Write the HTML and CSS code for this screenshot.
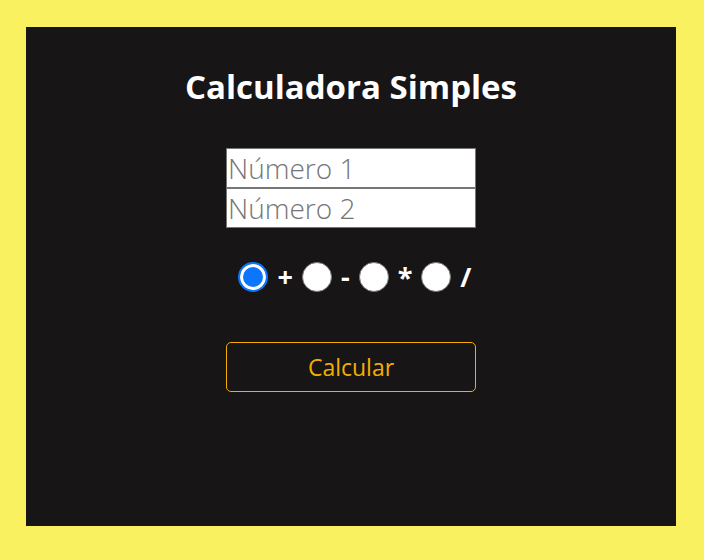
FILE: index.html
```html
<!DOCTYPE html>
<html lang="pt">
<head>
<meta charset="utf-8">
<title>Calculadora Simples</title>
<link rel="stylesheet" href="styles.css">
</head>
<body>
<main class="panel">
  <h1 class="title">Calculadora Simples</h1>
  <div class="inputs">
    <input class="field" type="text" placeholder="Número 1">
    <input class="field" type="text" placeholder="Número 2">
  </div>
  <div class="ops">
    <input class="radio" type="radio" name="op" checked><span class="op">+</span>
    <input class="radio" type="radio" name="op"><span class="op">-</span>
    <input class="radio" type="radio" name="op"><span class="op">*</span>
    <input class="radio" type="radio" name="op"><span class="op op-last">/</span>
  </div>
  <button class="btn" type="button">Calcular</button>
</main>
</body>
</html>
```
FILE: styles.css
```css
html, body {
  margin: 0;
  padding: 0;
  background: #f9f160;
  height: 100%;
}
body {
  padding: 27px 28px 34px 26px;
  box-sizing: border-box;
  font-family: "Open Sans", "Noto Sans", sans-serif;
}
.panel {
  width: 650px;
  height: 499px;
  background: #171516;
  display: flex;
  flex-direction: column;
  align-items: center;
  box-sizing: border-box;
  padding-top: 40px;
}
.title {
  margin: 0;
  color: #ffffff;
  font-size: 33px;
  font-weight: 700;
  line-height: 40px;
}
.inputs {
  display: flex;
  flex-direction: column;
  margin-top: 41px;
  width: 250px;
}
.field {
  display: block;
  width: 250px;
  height: 40px;
  box-sizing: border-box;
  margin: 0;
  padding: 0 1px;
  border: 1px solid #767676;
  background: #ffffff;
  font-family: "Open Sans", sans-serif;
  font-weight: 300;
  font-size: 28px;
  color: #333;
}
.field::placeholder {
  color: #757575;
}
.ops {
  display: flex;
  align-items: center;
  margin-top: 34px;
  margin-left: 8px;
  height: 30px;
}
.radio {
  appearance: none;
  -webkit-appearance: none;
  flex: none;
  width: 30px;
  height: 30px;
  margin: 0 9px 0 0;
  border: 1px solid #767676;
  border-radius: 50%;
  background: #ffffff;
  box-sizing: border-box;
}
.radio:checked {
  border: 2px solid #0b75fd;
  box-shadow: inset 0 0 0 3px #ffffff;
  background: #0b75fd;
}
.op {
  color: #ffffff;
  font-weight: 700;
  font-size: 27px;
  margin-right: 9px;
  line-height: 30px;
}
.op-last {
  margin-right: 0;
}
.btn {
  margin-top: 50px;
  width: 250px;
  height: 50px;
  background: transparent;
  border: 1px solid #f5ad00;
  border-radius: 5px;
  color: #f5ad00;
  font-family: "Open Sans", sans-serif;
  font-size: 23px;
  font-weight: 400;
  cursor: pointer;
}
```
